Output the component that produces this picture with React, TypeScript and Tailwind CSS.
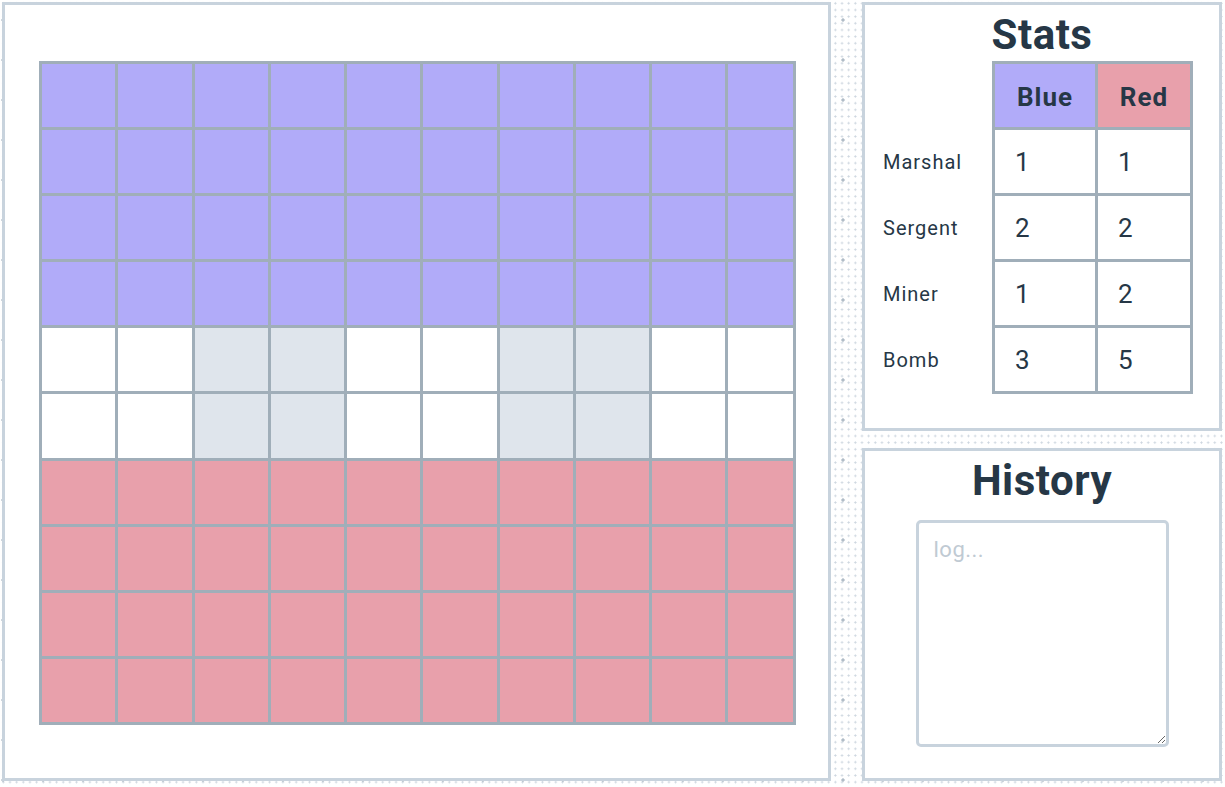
import React from "react";

const ROWS = 10;
const COLS = 10;

function cellColor(r: number, c: number): string {
  if (r < 4) return "bg-[#b1abf9]";
  if (r > 5) return "bg-[#e8a0ab]";
  if (c === 2 || c === 3 || c === 6 || c === 7) return "bg-[#dfe5ec]";
  return "bg-white";
}

const stats = [
  { label: "Marshal", blue: 1, red: 1 },
  { label: "Sergent", blue: 2, red: 2 },
  { label: "Miner", blue: 1, red: 2 },
  { label: "Bomb", blue: 3, red: 5 },
];

export default function App() {
  const cells: React.ReactNode[] = [];
  for (let r = 0; r < ROWS; r++) {
    for (let c = 0; c < COLS; c++) {
      cells.push(<div key={`${r}-${c}`} className={cellColor(r, c)} />);
    }
  }

  return (
    <div
      className="w-[1225px] h-[787px] flex gap-[31px] pt-[2px] pb-[6px] pl-[2px] pr-[3px] text-[#263746] bg-white [background-image:radial-gradient(circle,#b0bcc7_1.5px,transparent_1.7px),radial-gradient(circle,#ccd5de_0.9px,transparent_1.1px)] [background-size:40px_40px,6.667px_6.667px] [background-position:-17px_0px,0px_0px]"
      style={{ fontFamily: "Roboto, 'Noto Sans', sans-serif" }}
    >
      {/* Board panel */}
      <div className="w-[829px] h-full flex-none border-[3px] border-[#c8d3dd] bg-white pt-[56px] pl-[34px]">
        <div className="grid grid-cols-[repeat(9,73.25px)_65px] grid-rows-[repeat(10,63.1px)] gap-[3px] p-[3px] bg-[#a0aeb9] w-fit">
          {cells}
        </div>
      </div>

      {/* Right column */}
      <div className="w-[360px] flex-none flex flex-col gap-[17px]">
        {/* Stats */}
        <div className="h-[429px] flex-none border-[3px] border-[#c8d3dd] bg-white flex flex-col pt-[8px]">
          <h2 className="text-[42px] leading-[44px] font-bold text-center tracking-[0.5px]">Stats</h2>
          <div className="flex justify-end pr-[26px] mt-[4px]">
            <div className="flex flex-col w-[109px] pt-[3px] gap-[3px]">
              <div className="h-[63px]" />
              {stats.map((s) => (
                <div key={s.label} className="h-[63px] flex items-center text-[20px] tracking-[1px]">
                  {s.label}
                </div>
              ))}
            </div>
            <div className="grid grid-cols-[100px_92px] auto-rows-[63px] gap-[3px] p-[3px] bg-[#a0aeb9]">
              <div className="bg-[#b1abf9] flex items-center justify-center pt-[3px] text-[26px] font-bold tracking-[1px]">Blue</div>
              <div className="bg-[#e8a0ab] flex items-center justify-center pt-[3px] text-[26px] font-bold tracking-[1px]">Red</div>
              {stats.map((s) => (
                <React.Fragment key={s.label}>
                  <div className="bg-white flex items-center pl-[20px] pt-[1px] text-[26px]">{s.blue}</div>
                  <div className="bg-white flex items-center pl-[20px] pt-[1px] text-[26px]">{s.red}</div>
                </React.Fragment>
              ))}
            </div>
          </div>
        </div>

        {/* History */}
        <div className="flex-1 border-[3px] border-[#c8d3dd] bg-white flex flex-col items-center pt-[8px]">
          <h2 className="text-[42px] leading-[44px] font-bold text-center tracking-[0.5px]">History</h2>
          <textarea
            placeholder="log..."
            className="mt-[17px] w-[253px] h-[227px] border-[3px] border-[#c8d3dd] rounded-[5px] px-[15px] pt-[13px] text-[22px] leading-[28px] tracking-[0.5px] placeholder:text-[#c0cad3] outline-none"
            style={{ fontFamily: "Roboto, 'Noto Sans', sans-serif" }}
          />
        </div>
      </div>
    </div>
  );
}
